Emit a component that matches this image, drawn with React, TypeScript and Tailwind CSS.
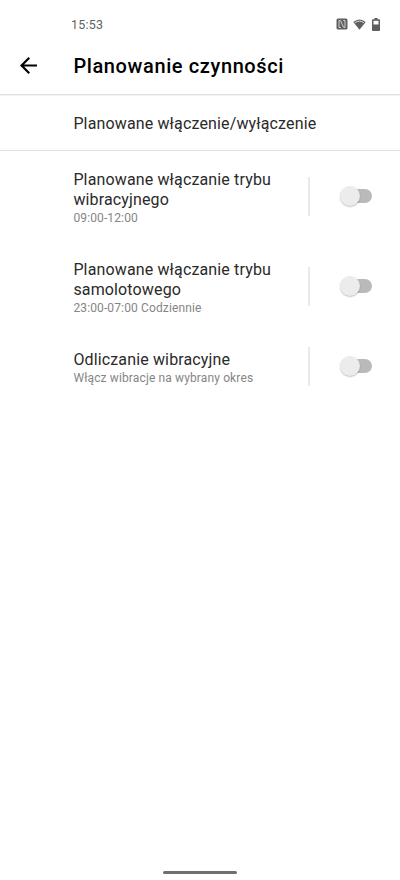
import { useState } from 'react'

interface Item {
  id: string
  title: string[]
  detail: string
}

const items: Item[] = [
  { id: 'vibrate', title: ['Planowane włączanie trybu', 'wibracyjnego'], detail: '09:00-12:00' },
  { id: 'airplane', title: ['Planowane włączanie trybu', 'samolotowego'], detail: '23:00-07:00 Codziennie' },
  { id: 'countdown', title: ['Odliczanie wibracyjne'], detail: 'Włącz wibracje na wybrany okres' },
]

const Toggle = ({ on, onClick }: { on: boolean; onClick: () => void }) => (
  <button
    role="switch"
    aria-checked={on}
    onClick={onClick}
    className={`flex h-[14px] w-[31px] items-center rounded-full ${on ? 'justify-end bg-blue-300' : 'bg-[#bababa]'}`}
  >
    <span className="-ml-[1px] h-5 w-5 shrink-0 rounded-full bg-[#ececec] shadow-[0_1px_1.5px_rgba(0,0,0,0.24)]" />
  </button>
)

const App = () => {
  const [active, setActive] = useState<string[]>([])

  const toggle = (id: string) => {
    setActive(active.includes(id) ? active.filter((a) => a !== id) : [...active, id])
  }

  return (
    <div className="flex h-[880px] w-[400px] flex-col bg-white font-['Roboto',sans-serif] text-[#2a2a2a]">
      {/* Status bar */}
      <div className="flex h-12 items-center justify-between pl-[71px] pr-5 text-[#5f5f5f]">
        <span className="pt-[2px] text-[12.5px] tracking-[0.2px]">15:53</span>
        <div className="flex items-center">
          <svg width="12" height="12" viewBox="0 0 12 12">
            <rect x="0.5" y="0.5" width="11" height="11" rx="1.5" fill="#5f5f5f" />
            <path d="M4.9 9.5H3V2.5H4.4L7.6 9.2M7.2 2.5H9V9.5H7.6" fill="none" stroke="#dcdcdc" strokeWidth="0.9" />
          </svg>
          <svg width="13" height="11" viewBox="0 0 13 11" className="ml-[5px]">
            <path d="M0.3 3Q6.5-2 12.7 3L6.5 10.7Z" fill="#5f5f5f" />
            <path d="M2.1 3.7Q6.5 0.6 10.9 3.7" fill="none" stroke="#dddddd" strokeWidth="1" />
          </svg>
          <svg width="8" height="13" viewBox="0 0 8 13" className="ml-[6px]">
            <path d="M2.5 0h3v1.3H7q1 0 1 1V12q0 1-1 1H1q-1 0-1-1V2.3q0-1 1-1h1.5z" fill="#5f5f5f" />
            <path d="M1.5 2.8h5v3.7h-5z" fill="white" />
          </svg>
        </div>
      </div>

      {/* Header */}
      <div className="flex h-[47px] items-center border-b border-[#e2e2e2] pb-2.5 pl-5 shadow-[0_1px_1px_rgba(0,0,0,0.05)]">
        <button aria-label="Wstecz" className="w-[53.4px] pb-[2px]">
          <svg width="17" height="17" viewBox="4 4 16 16" fill="black">
            <path d="M20 11H7.83l5.59-5.59L12 4l-8 8 8 8 1.41-1.41L7.83 13H20z" />
          </svg>
        </button>
        <h1 className="text-[20px] font-medium tracking-[0.61px] text-black">Planowanie czynności</h1>
      </div>

      <div className="flex h-14 items-center border-b border-[#e2e2e2] pl-[73.4px] pt-[2px] text-[16px] tracking-[0.14px]">
        Planowane włączenie/wyłączenie
      </div>

      {/* Schedule list */}
      <div className="flex flex-1 flex-col">
        {items.map((item) => {
          const tall = item.title.length > 1
          return (
            <div key={item.id} className={`flex items-center pl-[73.4px] ${tall ? 'h-[90px]' : 'h-[70px]'}`}>
              <div className="w-[234.6px] pt-[5px]">
                {item.title.map((line) => (
                  <div key={line} className={`text-[16px] tracking-[0.14px] ${tall ? 'leading-[20px]' : 'leading-[19px]'}`}>
                    {line}
                  </div>
                ))}
                <div className={`text-[12px] tracking-[0.13px] text-[#858585] ${tall ? 'pb-[2px] leading-[16px]' : 'leading-[18px]'}`}>
                  {item.detail}
                </div>
              </div>
              <div className="mr-[31px] h-[39px] w-[2px] bg-[#e9e9e9]" />
              <Toggle on={active.includes(item.id)} onClick={() => toggle(item.id)} />
            </div>
          )
        })}
      </div>

      {/* Gesture bar */}
      <div className="flex h-[9px] justify-center">
        <div className="h-[3px] w-[74px] rounded-full bg-[#707070]" />
      </div>
    </div>
  )
}

export default App
